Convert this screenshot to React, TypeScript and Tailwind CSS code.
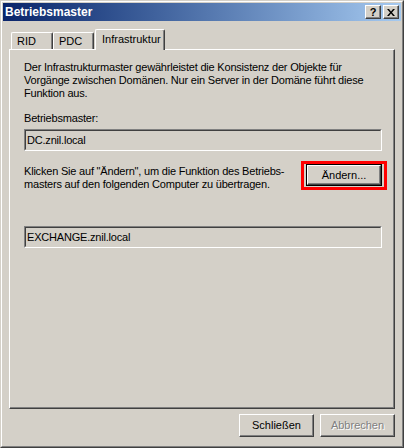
import React from "react";

const font = { fontFamily: '"Liberation Sans", Arial, sans-serif' };

function TitleButton({ children }: { children: React.ReactNode }) {
  return (
    <div className="w-[16px] h-[14px] bg-[#d4d0c8] border border-t-white border-l-white border-r-[#404040] border-b-[#404040] shadow-[inset_-1px_-1px_0_#808080] flex items-center justify-center">
      {children}
    </div>
  );
}

function Tab({ label, active, className }: { label: string; active?: boolean; className: string }) {
  return (
    <div
      className={
        active
          ? `relative z-10 h-[21px] -mb-px bg-[#d4d0c8] border-t border-l border-r border-t-white border-l-white border-r-[#404040] shadow-[inset_-1px_0_0_#808080] rounded-tl-[2px] rounded-tr-[2px] pl-[6px] pt-[3px] whitespace-nowrap ${className}`
          : `h-[17px] bg-[#d4d0c8] border-t border-l border-r border-t-white border-l-white border-r-[#404040] shadow-[inset_-1px_0_0_#808080] rounded-tl-[2px] rounded-tr-[2px] pl-[5px] pt-[2px] whitespace-nowrap ${className}`
      }
    >
      {label}
    </div>
  );
}

function Field({ value }: { value: string }) {
  return (
    <div className="h-[22px] border border-t-[#808080] border-l-[#808080] border-r-white border-b-white">
      <div className="h-full border border-t-[#404040] border-l-[#404040] border-r-[#d4d0c8] border-b-[#d4d0c8] pl-[1px] flex items-center">
        {value}
      </div>
    </div>
  );
}

function Button({ label, disabled }: { label: string; disabled?: boolean }) {
  return (
    <div className="w-[75px] h-[23px] border border-t-white border-l-white border-r-[#404040] border-b-[#404040] shadow-[inset_-1px_-1px_0_#808080] flex items-center justify-center">
      {disabled ? (
        <span className="text-[#808080] [text-shadow:1px_1px_0_#ffffff]">{label}</span>
      ) : (
        <span>{label}</span>
      )}
    </div>
  );
}

export default function App() {
  return (
    <div
      className="w-[404px] h-[448px] bg-[#d4d0c8] border border-t-[#d4d0c8] border-l-[#d4d0c8] border-r-[#404040] border-b-[#404040] text-[11px] leading-[13px] text-black"
      style={font}
    >
      <div className="h-full border border-t-white border-l-white border-r-[#808080] border-b-[#808080] p-px flex flex-col">
        <div className="h-[18px] bg-gradient-to-r from-[#0a246a] to-[#a6caf0] flex items-center pl-[2px] pr-[2px]">
          <span className="flex-1 text-white font-bold text-[12px]">Betriebsmaster</span>
          <div className="flex gap-[2px]">
            <TitleButton>
              <span className="font-bold text-[11px] leading-none">?</span>
            </TitleButton>
            <TitleButton>
              <svg width="8" height="7" viewBox="0 0 8 7">
                <path d="M0 0h2l2 2.5L6 0h2L5 3.5 8 7H6L4 4.5 2 7H0l3-3.5z" fill="#000" />
              </svg>
            </TitleButton>
          </div>
        </div>

        <div className="flex-1 px-[6px] pt-[8px] flex flex-col">
          <div className="h-[20px] flex items-end pl-[2px]">
            <Tab label="RID" className="w-[42px]" />
            <Tab label="PDC" className="w-[41px]" />
            <Tab label="Infrastruktur" active className="w-[70px] ml-px" />
          </div>

          <div className="h-[360px] border border-t-white border-l-white border-r-[#404040] border-b-[#404040] shadow-[inset_-1px_-1px_0_#808080] pl-[14px] pr-[12px] pt-[11px] flex flex-col tracking-[-0.2px]">
            <p className="whitespace-nowrap">
              Der Infrastrukturmaster gewährleistet die Konsistenz der Objekte für
              <br />
              Vorgänge zwischen Domänen. Nur ein Server in der Domäne führt diese
              <br />
              Funktion aus.
            </p>
            <p className="mt-[12px] mb-[4px]">Betriebsmaster:</p>
            <Field value="DC.znil.local" />

            <div className="mt-[13px] flex justify-between items-start">
              <p className="mt-px whitespace-nowrap">
                Klicken Sie auf "Ändern", um die Funktion des Betriebs-
                <br />
                masters auf den folgenden Computer zu übertragen.
              </p>
              <div className="relative shrink-0 w-[76px] h-[22px] border border-black tracking-normal">
                <div className="h-full border border-t-white border-l-white border-r-[#404040] border-b-[#404040] shadow-[inset_-1px_-1px_0_#808080] flex items-center justify-center">
                  Ändern...
                </div>
                <div className="absolute -left-[6px] -right-[6px] -top-[4px] -bottom-[5px] border-[3px] border-[#ff0000]" />
              </div>
            </div>

            <div className="mt-[35px]">
              <Field value="EXCHANGE.znil.local" />
            </div>
          </div>

          <div className="mt-[5px] flex justify-end gap-[6px]">
            <Button label="Schließen" />
            <Button label="Abbrechen" disabled />
          </div>
        </div>
      </div>
    </div>
  );
}
